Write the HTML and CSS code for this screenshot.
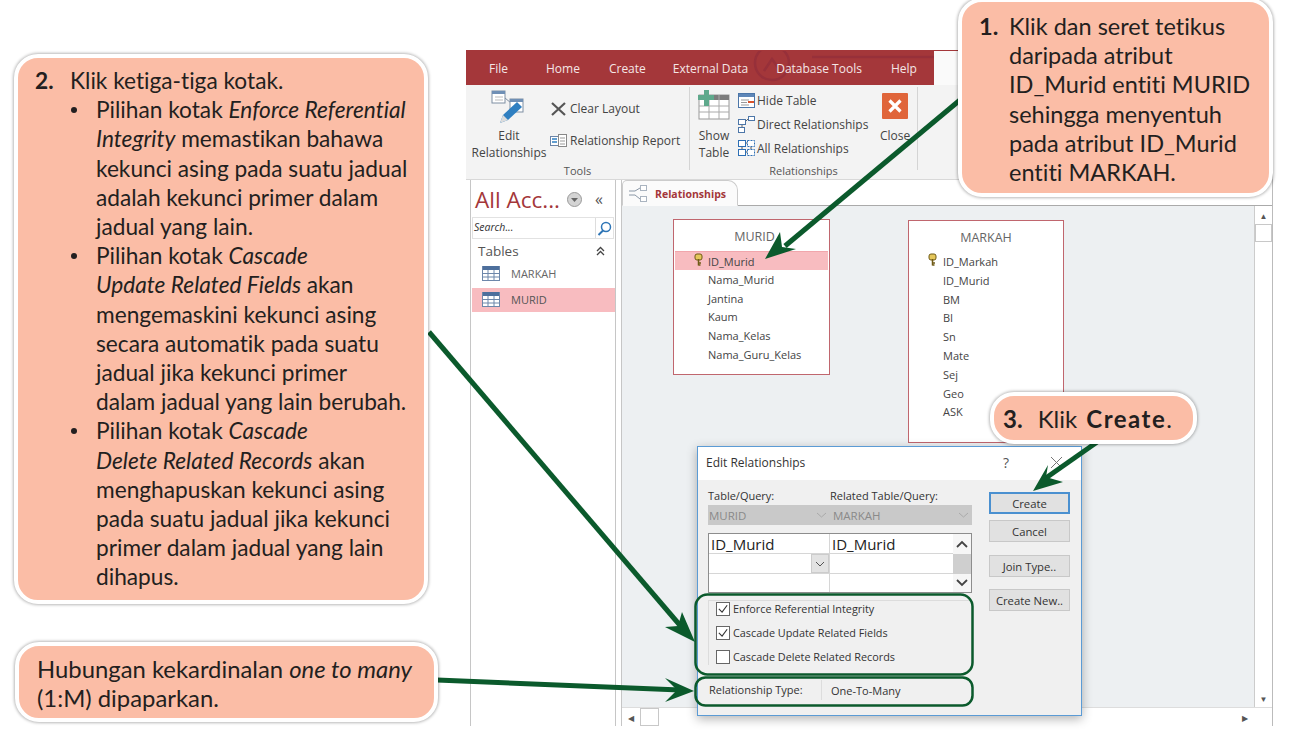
FILE: index.html
```html
<!DOCTYPE html>
<html lang="ms">
<head>
<meta charset="utf-8">
<title>Edit Relationships</title>
<link rel="stylesheet" href="styles.css">
</head>
<body>
<main class="page">
  <section class="window">
    <nav class="titlebar">
      <div class="tabs">
        <svg class="watermark" width="200" height="34" viewBox="0 0 200 34"><circle cx="30" cy="12" r="17" fill="none" stroke="#97303a" stroke-width="2.500"/><path d="M22 20L30 8l9 13M70 6h125l8 10" fill="none" stroke="#97303a" stroke-width="2.500"/></svg>
        <span class="tab-file">File</span>
        <span class="tab-home">Home</span>
        <span class="tab-create">Create</span>
        <span class="tab-ext">External Data</span>
        <span class="tab-db">Database Tools</span>
        <span>Help</span>
      </div>
    </nav>
    <div class="ribbon">
      <div class="group group-tools">
        <div class="group-body">
          <div class="big-btn big-edit">
            <svg class="big-icon" width="36" height="34" viewBox="0 0 36 34"><rect x="1" y="1" width="13" height="12" fill="#fff" stroke="#7f8fa3"/><rect x="1" y="1" width="13" height="3" fill="#6f8fb5"/><path d="M4 7h8M4 10h8" stroke="#bbb"/><path d="M14 8l6 5" stroke="#7f8fa3"/><rect x="19" y="9" width="13" height="13" fill="#fff" stroke="#7f8fa3"/><rect x="19" y="9" width="13" height="3" fill="#6f8fb5"/><path d="M9 33l3-8 14-13 5 5-14 13z" fill="#2f7fc1"/><path d="M9 33l3-8 5 5z" fill="#dcdcdc"/></svg>
            <span>Edit<br>Relationships</span>
          </div>
          <div class="small-col col-tools">
            <div class="small-btn"><svg width="17" height="16" viewBox="0 0 17 16"><path d="M2 2l13 12M15 2L2 14" stroke="#555" stroke-width="2.200"/></svg><span>Clear Layout</span></div>
            <div class="small-btn"><svg width="17" height="14" viewBox="0 0 17 14"><rect x=".5" y="2.500" width="8" height="9" fill="#fff" stroke="#6b85a8"/><rect x="8.500" y=".5" width="8" height="12" fill="#fff" stroke="#888"/><path d="M2 5h5M2 8h5" stroke="#2f7fc1" stroke-width="1.400"/><path d="M10 4h5M10 7h5M10 10h5" stroke="#999"/></svg><span>Relationship Report</span></div>
          </div>
        </div>
        <div class="group-label">Tools</div>
      </div>
      <div class="group group-rel">
        <div class="group-body">
          <div class="big-btn big-show">
            <svg class="big-icon" width="32" height="30" viewBox="0 0 32 30"><rect x="1" y="5" width="30" height="24" fill="#fff" stroke="#999"/><rect x="12" y="5" width="19" height="5" fill="#7c7c7c"/><path d="M1 16h30M1 22h30M11 5v24M21 5v24" stroke="#aaa"/><path d="M6 0h5v5h5v5h-5v6H6v-6H0V5h6z" fill="#5fa98c"/></svg>
            <span>Show<br>Table</span>
          </div>
          <div class="small-col col-rel">
            <div class="small-btn"><svg width="17" height="15" viewBox="0 0 17 15"><rect x=".5" y=".5" width="16" height="14" fill="#fff" stroke="#4c76a8"/><rect x="1" y="1" width="15" height="3" fill="#5f87b8"/><path d="M3 7h8M3 9.500h6M3 12h8" stroke="#999"/><rect x="10" y="8" width="6" height="2" fill="#d9532c"/></svg><span>Hide Table</span></div>
            <div class="small-btn"><svg width="17" height="17" viewBox="0 0 17 17"><rect x=".5" y="3.500" width="7" height="5" fill="#fff" stroke="#4c76a8"/><rect x="10.500" y=".5" width="6" height="4" fill="#fff" stroke="#4c76a8"/><rect x=".5" y="11.500" width="6" height="5" fill="#fff" stroke="#4c76a8"/><path d="M8 5l2-2M4 9v2" stroke="#666"/></svg><span>Direct Relationships</span></div>
            <div class="small-btn"><svg width="17" height="16" viewBox="0 0 17 16"><rect x=".5" y=".5" width="7" height="6" fill="#fff" stroke="#2d6fb5"/><rect x="9.500" y=".5" width="7" height="6" fill="#fff" stroke="#2d6fb5" stroke-dasharray="2 1"/><rect x=".5" y="9.500" width="7" height="6" fill="#fff" stroke="#2d6fb5"/><rect x="9.500" y="9.500" width="7" height="6" fill="#fff" stroke="#2d6fb5" stroke-dasharray="2 1"/><path d="M4 7v2M13 7v2M8 3h1M8 12h1" stroke="#555"/></svg><span>All Relationships</span></div>
          </div>
          <div class="big-btn big-close">
            <svg class="big-icon" width="26" height="26" viewBox="0 0 26 26"><rect width="26" height="26" rx="1" fill="#e0653a"/><path d="M7.500 7.500l11 11M18.500 7.500l-11 11" stroke="#fff" stroke-width="3.200"/></svg>
            <span>Close</span>
          </div>
        </div>
        <div class="group-label">Relationships</div>
      </div>
    </div>
    <div class="main">
      <aside class="nav">
        <div class="nav-head">
          <span class="nav-title">All Acc...</span>
          <svg width="15" height="15" viewBox="0 0 15 15"><circle cx="7.500" cy="7.500" r="7" fill="#d4d4d4" stroke="#9a9a9a"/><path d="M4 6h7l-3.500 4z" fill="#666"/></svg>
          <span class="nav-collapse">«</span>
        </div>
        <div class="nav-search">
          <span class="search-text">Search...</span>
          <span class="search-btn"><svg width="15" height="15" viewBox="0 0 15 15"><circle cx="9" cy="6" r="4.500" fill="none" stroke="#2e75b6" stroke-width="1.500"/><path d="M6 9.500L1.500 14" stroke="#2e75b6" stroke-width="2"/></svg></span>
        </div>
        <div class="nav-section"><span>Tables</span><svg class="nav-chev" width="9" height="10" viewBox="0 0 9 10"><path d="M1 5l3.500-3.500L8 5M1 9l3.500-3.500L8 9" fill="none" stroke="#444" stroke-width="1.300"/></svg></div>
        <div class="nav-item">
          <svg width="18" height="15" viewBox="0 0 18 15"><rect width="18" height="15" fill="#fff"/><rect width="18" height="4" fill="#4d6f9c"/><path d="M.5 0v15M6 4v11M12 4v11M17.500 0v15M0 7.500h18M0 11h18M0 14.500h18" stroke="#6d87aa"/></svg>
          <span>MARKAH</span>
        </div>
        <div class="nav-item nav-item-on">
          <svg width="18" height="15" viewBox="0 0 18 15"><rect width="18" height="15" fill="#fff"/><rect width="18" height="4" fill="#4d6f9c"/><path d="M.5 0v15M6 4v11M12 4v11M17.500 0v15M0 7.500h18M0 11h18M0 14.500h18" stroke="#6d87aa"/></svg>
          <span>MURID</span>
        </div>
      </aside>
      <div class="doc">
        <div class="doc-tabs">
          <div class="doc-tab">
            <svg width="18" height="17" viewBox="0 0 18 17"><rect x="11.500" y=".5" width="6" height="5" fill="#fff" stroke="#aab4c0"/><rect x="11.500" y="11.500" width="6" height="5" fill="#fff" stroke="#aab4c0"/><path d="M0 6h6l5-3M0 10h6l5 4" fill="none" stroke="#8a97a6"/></svg>
            <span>Relationships</span>
          </div>
        </div>
        <div class="canvas-row">
          <div class="canvas">
            <div class="er-table er-murid">
              <div class="er-title">MURID</div>
              <div class="er-row er-key"><svg class="key" width="9" height="13" viewBox="0 0 9 13"><rect x="1" y="1" width="7" height="6" rx="2" fill="#e4c65a" stroke="#6f5a16"/><path d="M4.500 6v6.500M4.500 10h2.500M4.500 12h2" stroke="#6f5a16" stroke-width="1.500"/></svg>ID_Murid</div>
              <div class="er-row">Nama_Murid</div>
              <div class="er-row">Jantina</div>
              <div class="er-row">Kaum</div>
              <div class="er-row">Nama_Kelas</div>
              <div class="er-row">Nama_Guru_Kelas</div>
            </div>
            <div class="er-table er-markah">
              <div class="er-title">MARKAH</div>
              <div class="er-row"><svg class="key" width="9" height="13" viewBox="0 0 9 13"><rect x="1" y="1" width="7" height="6" rx="2" fill="#e4c65a" stroke="#6f5a16"/><path d="M4.500 6v6.500M4.500 10h2.500M4.500 12h2" stroke="#6f5a16" stroke-width="1.500"/></svg>ID_Markah</div>
              <div class="er-row">ID_Murid</div>
              <div class="er-row">BM</div>
              <div class="er-row">BI</div>
              <div class="er-row">Sn</div>
              <div class="er-row">Mate</div>
              <div class="er-row">Sej</div>
              <div class="er-row">Geo</div>
              <div class="er-row">ASK</div>
            </div>
          </div>
          <div class="vscroll">
            <span class="sb-arrow">▲</span>
            <span class="sb-thumb"></span>
            <span class="sb-fill"></span>
            <span class="sb-arrow">▼</span>
          </div>
        </div>
        <div class="hscroll">
          <span class="sb-arrow">◀</span>
          <span class="hs-thumb"></span>
          <span class="sb-fill"></span>
          <span class="sb-arrow">▶</span>
        </div>
      </div>
    </div>
  </section>

  <section class="dialog">
    <header class="dlg-title">
      <span class="dlg-name">Edit Relationships</span>
      <span class="dlg-help">?</span>
      <svg class="dlg-x" width="13" height="13" viewBox="0 0 13 13"><path d="M1 1l11 11M12 1L1 12" stroke="#777" stroke-width="1"/></svg>
    </header>
    <div class="dlg-body">
      <div class="dlg-left">
        <div class="dlg-labels"><span class="col-a">Table/Query:</span><span>Related Table/Query:</span></div>
        <div class="dlg-combo">
          <span class="col-a combo-cell">MURID<svg class="chev" width="11" height="6" viewBox="0 0 11 6"><path d="M1 1l4.500 4L10 1" fill="none" stroke="#aaa"/></svg></span>
          <span class="combo-cell combo-b">MARKAH<svg class="chev" width="11" height="6" viewBox="0 0 11 6"><path d="M1 1l4.500 4L10 1" fill="none" stroke="#aaa"/></svg></span>
        </div>
        <div class="grid">
          <div class="grid-cols">
            <div class="grid-row grid-row-1"><span class="cell-a">ID_Murid</span><span class="cell-b">ID_Murid</span></div>
            <div class="grid-row"><span class="cell-a"><span class="drop"><svg width="10" height="6" viewBox="0 0 10 6"><path d="M1 1l4 4 4-4" fill="none" stroke="#555"/></svg></span></span><span class="cell-b"></span></div>
            <div class="grid-row grid-row-last"><span class="cell-a"></span><span class="cell-b"></span></div>
          </div>
          <div class="grid-scroll">
            <svg width="18" height="20" viewBox="0 0 18 20"><path d="M4 13l5-5 5 5" fill="none" stroke="#444" stroke-width="1.800"/></svg>
            <span class="grid-thumb"></span>
            <svg width="18" height="18" viewBox="0 0 18 18"><path d="M4 6l5 5 5-5" fill="none" stroke="#444" stroke-width="1.800"/></svg>
          </div>
        </div>
        <div class="checks">
          <label class="check"><span class="box on"><svg width="13" height="13" viewBox="0 0 13 13"><path d="M2 7l3.500 3.500L11 3" fill="none" stroke="#333" stroke-width="1.200"/></svg></span>Enforce Referential Integrity</label>
          <label class="check"><span class="box on"><svg width="13" height="13" viewBox="0 0 13 13"><path d="M2 7l3.500 3.500L11 3" fill="none" stroke="#333" stroke-width="1.200"/></svg></span>Cascade Update Related Fields</label>
          <label class="check"><span class="box"></span>Cascade Delete Related Records</label>
        </div>
        <div class="rel-type"><span class="rel-label">Relationship Type:</span><span class="rel-value">One-To-Many</span></div>
      </div>
      <div class="dlg-buttons">
        <span class="btn btn-create">Create</span>
        <span class="btn btn-cancel">Cancel</span>
        <span class="btn btn-join">Join Type..</span>
        <span class="btn btn-new">Create New..</span>
      </div>
    </div>
  </section>

  <svg class="arrows" width="1291" height="736" viewBox="0 0 1291 736">
    <g fill="none" stroke="#0b5a2c" stroke-width="2.500">
      <rect x="695.500" y="594.500" width="277" height="80" rx="12"/>
      <rect x="695.500" y="677.500" width="277" height="28" rx="10"/>
    </g>
    <g stroke="#0b5a2c" stroke-width="5" fill="none">
      <path d="M960 100L785 246"/>
      <path d="M429 332L684 630"/>
      <path d="M437 680L680 690"/>
      <path d="M1100 440L1043 480"/>
    </g>
    <g fill="#0b5a2c">
      <path d="M765 259L780 232L782 247L796 249z"/>
      <path d="M695 642L665 627L678 626L682 612z"/>
      <path d="M694 691L665 678L677 690L665 702z"/>
      <path d="M1033 491L1048 465L1046 477L1063 482z"/>
    </g>
  </svg>

  <aside class="callout callout-2">
    <div class="step"><b class="num">2.</b><div>
      Klik ketiga-tiga kotak.
      <ul>
        <li>Pilihan kotak <em>Enforce Referential<br>Integrity</em> memastikan bahawa<br>kekunci asing pada suatu jadual<br>adalah kekunci primer dalam<br>jadual yang lain.</li>
        <li>Pilihan kotak <em>Cascade<br>Update Related Fields</em> akan<br>mengemaskini kekunci asing<br>secara automatik pada suatu<br>jadual jika kekunci primer<br>dalam jadual yang lain berubah.</li>
        <li>Pilihan kotak <em>Cascade<br>Delete Related Records</em> akan<br>menghapuskan kekunci asing<br>pada suatu jadual jika kekunci<br>primer dalam jadual yang lain<br>dihapus.</li>
      </ul>
    </div></div>
  </aside>
  <aside class="callout callout-1">
    <div class="step"><b class="num">1.</b><div>Klik dan seret tetikus<br>daripada atribut<br>ID_Murid entiti MURID<br>sehingga menyentuh<br>pada atribut ID_Murid<br>entiti MARKAH.</div></div>
  </aside>
  <aside class="callout callout-3"><b class="num-3">3.</b>Klik <b class="strong">Create</b>.</aside>
  <aside class="callout callout-4">Hubungan kekardinalan <em>one to many</em><br>(1:M) dipaparkan.</aside>
</main>
</body>
</html>
```
FILE: styles.css
```css
* { box-sizing: border-box; }
html, body { margin: 0; padding: 0; background: #fff; }
body { font-family: "Open Sans", "Noto Sans", sans-serif; color: #444; }
.page { position: relative; width: 1291px; height: 736px; overflow: hidden; padding: 50px 0 0 466px; }

/* Access window */
.window { width: 807px; height: 676px; display: flex; flex-direction: column; border-top: 1px solid #a4373a; border-right: 1px solid #bbb; background: #fff; }
.titlebar { height: 34px; flex: none; background: #fafafa; }
.tabs { position: relative; overflow: hidden; width: 468px; height: 34px; background: #a4373a; color: #f4e6e6; font-size: 12px; display: flex; align-items: center; padding-left: 23px; }
.tabs span { position: relative; }
.watermark { position: absolute; left: 276px; top: 0; }
.tab-file { margin-right: 38px; }
.tab-home { margin-right: 29px; }
.tab-create { margin-right: 27px; }
.tab-ext { margin-right: 28px; }
.tab-db { margin-right: 29px; }

.ribbon { height: 95px; flex: none; display: flex; background: #f3f3f3; border-bottom: 1px solid #d8d8d8; font-size: 12px; color: #444; }
.group { display: flex; flex-direction: column; border-right: 1px solid #d4d4d4; margin: 2px 0 9px; }
.group-tools { width: 224px; }
.group-rel { width: 228px; }
.group-body { height: 77px; flex: none; display: flex; }
.group-label { text-align: center; font-size: 11px; line-height: 14px; color: #555; }
.big-btn { display: flex; flex-direction: column; align-items: center; text-align: center; line-height: 17px; }
.big-icon { flex: none; }
.big-edit { width: 86px; padding-top: 3px; }
.big-edit .big-icon { margin-bottom: 3px; }
.big-show { width: 48px; flex: none; padding-top: 3px; }
.big-show .big-icon { margin-bottom: 7px; }
.big-close { width: 30px; flex: none; margin-left: 7px; padding-top: 6px; }
.big-close .big-icon { margin-bottom: 8px; }
.small-col { display: flex; flex-direction: column; }
.small-btn { display: flex; align-items: center; gap: 3px; white-space: nowrap; }
.small-btn svg { flex: none; }
.col-tools { padding-top: 13px; gap: 15px; margin-left: -2px; }
.col-tools .small-btn { height: 17px; }
.col-rel { padding-top: 4px; margin-left: 0; width: 135px; flex: none; gap: 6px; }
.col-rel .small-btn { height: 18px; gap: 2px; }

.main { flex: 1; display: flex; min-height: 0; }
.nav { width: 146px; flex: none; margin-left: 4px; padding-left: 1px; border-left: 1px solid #c6c6c6; border-right: 1px solid #c6c6c6; }
.nav-head { display: flex; align-items: center; height: 37px; padding: 1px 0 0 3px; }
.nav-title { font-size: 22.500px; color: #a4373a; font-weight: 400; width: 92px; white-space: nowrap; }
.nav-collapse { margin-left: 13px; font-size: 16px; color: #555; }
.nav-search { height: 22px; width: 142px; display: flex; border: 1px solid #e2e2e2; background: #fff; }
.search-text { flex: 1; font-style: italic; font-size: 10.500px; line-height: 19px; padding-left: 1px; color: #333; }
.search-btn { width: 18px; border-left: 1px solid #ddd; display: flex; align-items: center; justify-content: center; }
.nav-section { display: flex; justify-content: space-between; align-items: flex-start; height: 24px; padding: 3px 10px 0 6px; font-size: 13.500px; color: #555; }
.nav-chev { margin-top: 4px; }
.nav-item { height: 25px; width: 143px; display: flex; align-items: center; gap: 11px; padding: 0 0 5px 10px; font-size: 11px; color: #666; }
.nav-item-on { background: #f8bcc0; height: 24px; padding-bottom: 1px; color: #555; }

.doc { flex: 1; margin-left: 5px; display: flex; flex-direction: column; min-width: 0; border-left: 1px solid #c6c6c6; }
.doc-tabs { height: 26px; flex: none; background: #fff; border-bottom: 1px solid #aaa; display: flex; }
.doc-tab { width: 116px; height: 26px; background: #fbfbfb; border: 1px solid #ccc; border-bottom: 1px solid #fbfbfb; border-radius: 5px 10px 0 0; display: flex; align-items: center; gap: 8px; padding: 1px 0 0 6px; font-size: 10.500px; font-weight: 700; color: #a4373a; }
.canvas-row { flex: 1; display: flex; min-height: 0; }
.canvas { flex: 1; position: relative; background: #edf0f2; }
.er-table { position: absolute; width: 157px; background: #fff; border: 1px solid #c0666e; }
.er-murid { left: 51px; top: 13px; height: 156px; }
.er-markah { left: 286px; top: 14px; width: 156px; height: 223px; }
.er-title { height: 31px; line-height: 33px; text-align: center; font-size: 12.500px; color: #666; }
.er-murid .er-title { padding-left: 6px; }
.er-row { position: relative; height: 18.800px; line-height: 19px; padding-left: 34px; font-size: 11px; color: #444; white-space: nowrap; }
.er-key { background: #f8bcc0; margin: 0 1px; padding-left: 33px; border-top: 1px solid #f1a6ac; }
.key { position: absolute; left: 19px; top: 1px; }
.vscroll { width: 18px; flex: none; background: #fff; border-left: 1px solid #ccc; display: flex; flex-direction: column; }
.sb-arrow { height: 18px; flex: none; display: flex; align-items: center; justify-content: center; font-size: 8px; color: #555; }
.sb-thumb { height: 18px; flex: none; border: 1px solid #c8c8c8; background: #fff; }
.sb-fill { flex: 1; }
.hscroll { height: 19px; flex: none; display: flex; padding-right: 18px; background: #fff; border-top: 1px solid #ddd; }
.hscroll .sb-arrow { width: 18px; }
.hs-thumb { width: 19px; border: 1px solid #c8c8c8; }

/* Dialog */
.dialog { position: absolute; left: 697px; top: 446px; width: 385px; height: 270px; background: #f0f0f0; border: 1px solid #5b9bd5; box-shadow: 0 3px 10px rgba(0, 0, 0, .3); font-size: 11px; color: #333; display: flex; flex-direction: column; }
.dlg-title { height: 33px; flex: none; background: #fff; display: flex; align-items: center; padding: 0 18px 2px 8px; font-size: 12px; }
.dlg-name { flex: 1; }
.dlg-help { margin-right: 41px; font-size: 14px; color: #555; }
.dlg-body { flex: 1; display: flex; padding: 6px 12px 0 10px; }
.dlg-left { width: 264px; flex: none; }
.dlg-labels { display: flex; height: 19px; line-height: 19px; font-size: 11px; }
.col-a { width: 122px; flex: none; }
.dlg-combo { display: flex; height: 20px; background: #c9c9c9; color: #8a8a8a; }
.combo-cell { position: relative; display: block; line-height: 21px; padding-left: 1px; font-size: 11.500px; }
.combo-b { flex: 1; padding-left: 3px; }
.chev { position: absolute; right: 3px; top: 7px; }
.grid { display: flex; height: 60px; margin-top: 8px; border: 1px solid #8d8d8d; background: #fff; }
.grid-cols { width: 244px; flex: none; }
.grid-row { display: flex; height: 20px; border-bottom: 1px solid #d6d6d6; }
.grid-row-1 { font-size: 15px; line-height: 21px; color: #222; }
.grid-row-last { border-bottom: 0; height: 18px; }
.cell-a { position: relative; width: 121px; flex: none; padding-left: 2px; border-right: 1px solid #d6d6d6; }
.cell-b { flex: 1; padding-left: 2px; }
.drop { position: absolute; right: 0; top: 0; width: 18px; height: 19px; background: #e3e3e3; border: 1px solid #ccc; display: flex; align-items: center; justify-content: center; }
.grid-scroll { flex: 1; display: flex; flex-direction: column; background: #f6f6f6; }
.grid-thumb { flex: 1; background: #cfcfcf; }
.checks { margin-top: 7px; padding: 7px 0 0 7px; position: relative; display: flex; flex-direction: column; gap: 9px; border-top: 1px solid #dcdcdc; border-left: 1px solid #dcdcdc; height: 65px; }
.check { display: flex; align-items: center; gap: 3px; height: 15px; white-space: nowrap; font-size: 10.850px; color: #333; }
.checks .check:first-child { margin-top: -7px; background: #f0f0f0; width: 180px; }
.box { width: 14px; height: 14px; flex: none; background: #fff; border: 1px solid #666; display: flex; align-items: center; justify-content: center; }
.rel-type { display: flex; margin-top: 15px; height: 20px; align-items: center; font-size: 11px; }
.rel-label { width: 114px; flex: none; padding-left: 1px; border-right: 1px solid #ddd; line-height: 20px; }
.rel-value { padding-left: 9px; }
.dlg-buttons { margin-left: 17px; width: 81px; display: flex; flex-direction: column; padding-top: 6px; }
.btn { display: flex; align-items: center; justify-content: center; width: 81px; background: #e1e1e1; border: 1px solid #c8c8c8; font-size: 11.300px; height: 22px; white-space: nowrap; }
.btn-create { border: 2px solid #4a90d0; height: 22px; }
.btn-cancel { margin-top: 6px; }
.btn-join { margin-top: 13px; }
.btn-new { margin-top: 12px; }

/* Overlay arrows and callouts */
.arrows { position: absolute; left: 0; top: 0; pointer-events: none; }
.callout { position: absolute; background: #fbbda6; border: 4px solid #fff; border-radius: 24px; box-shadow: 0 0 3px 1px rgba(0, 0, 0, .28); font-family: Lato, "Open Sans", sans-serif; font-variant-ligatures: none; font-size: 22.700px; line-height: 29.200px; color: #231f20; }
.callout-2 { left: 14px; top: 54px; width: 414px; height: 550px; padding: 8px 0 0 17px; }
.callout-1 { left: 958px; top: -2px; width: 315px; height: 199px; padding: 10px 0 0 17px; font-size: 23.500px; }
.callout-3 { left: 990px; top: 392px; width: 207px; height: 52px; padding: 8px 0 0 9px; white-space: nowrap; font-size: 24px; }
.callout-4 { left: 15px; top: 642px; width: 423px; height: 80px; padding: 8px 0 0 18px; white-space: nowrap; font-size: 23.850px; }
.step { display: flex; }
.num { width: 35px; flex: none; }
.num-3 { margin-right: 15px; }
.strong { letter-spacing: 1.500px; margin-left: 3px; }
.callout-1 .num { width: 30px; }
.callout ul { margin: 0; padding: 0 0 0 26px; list-style: none; }
.callout li { position: relative; }
.callout li::before { content: ""; position: absolute; left: -25px; top: 12px; width: 6px; height: 6px; border-radius: 50%; background: #231f20; }
```
